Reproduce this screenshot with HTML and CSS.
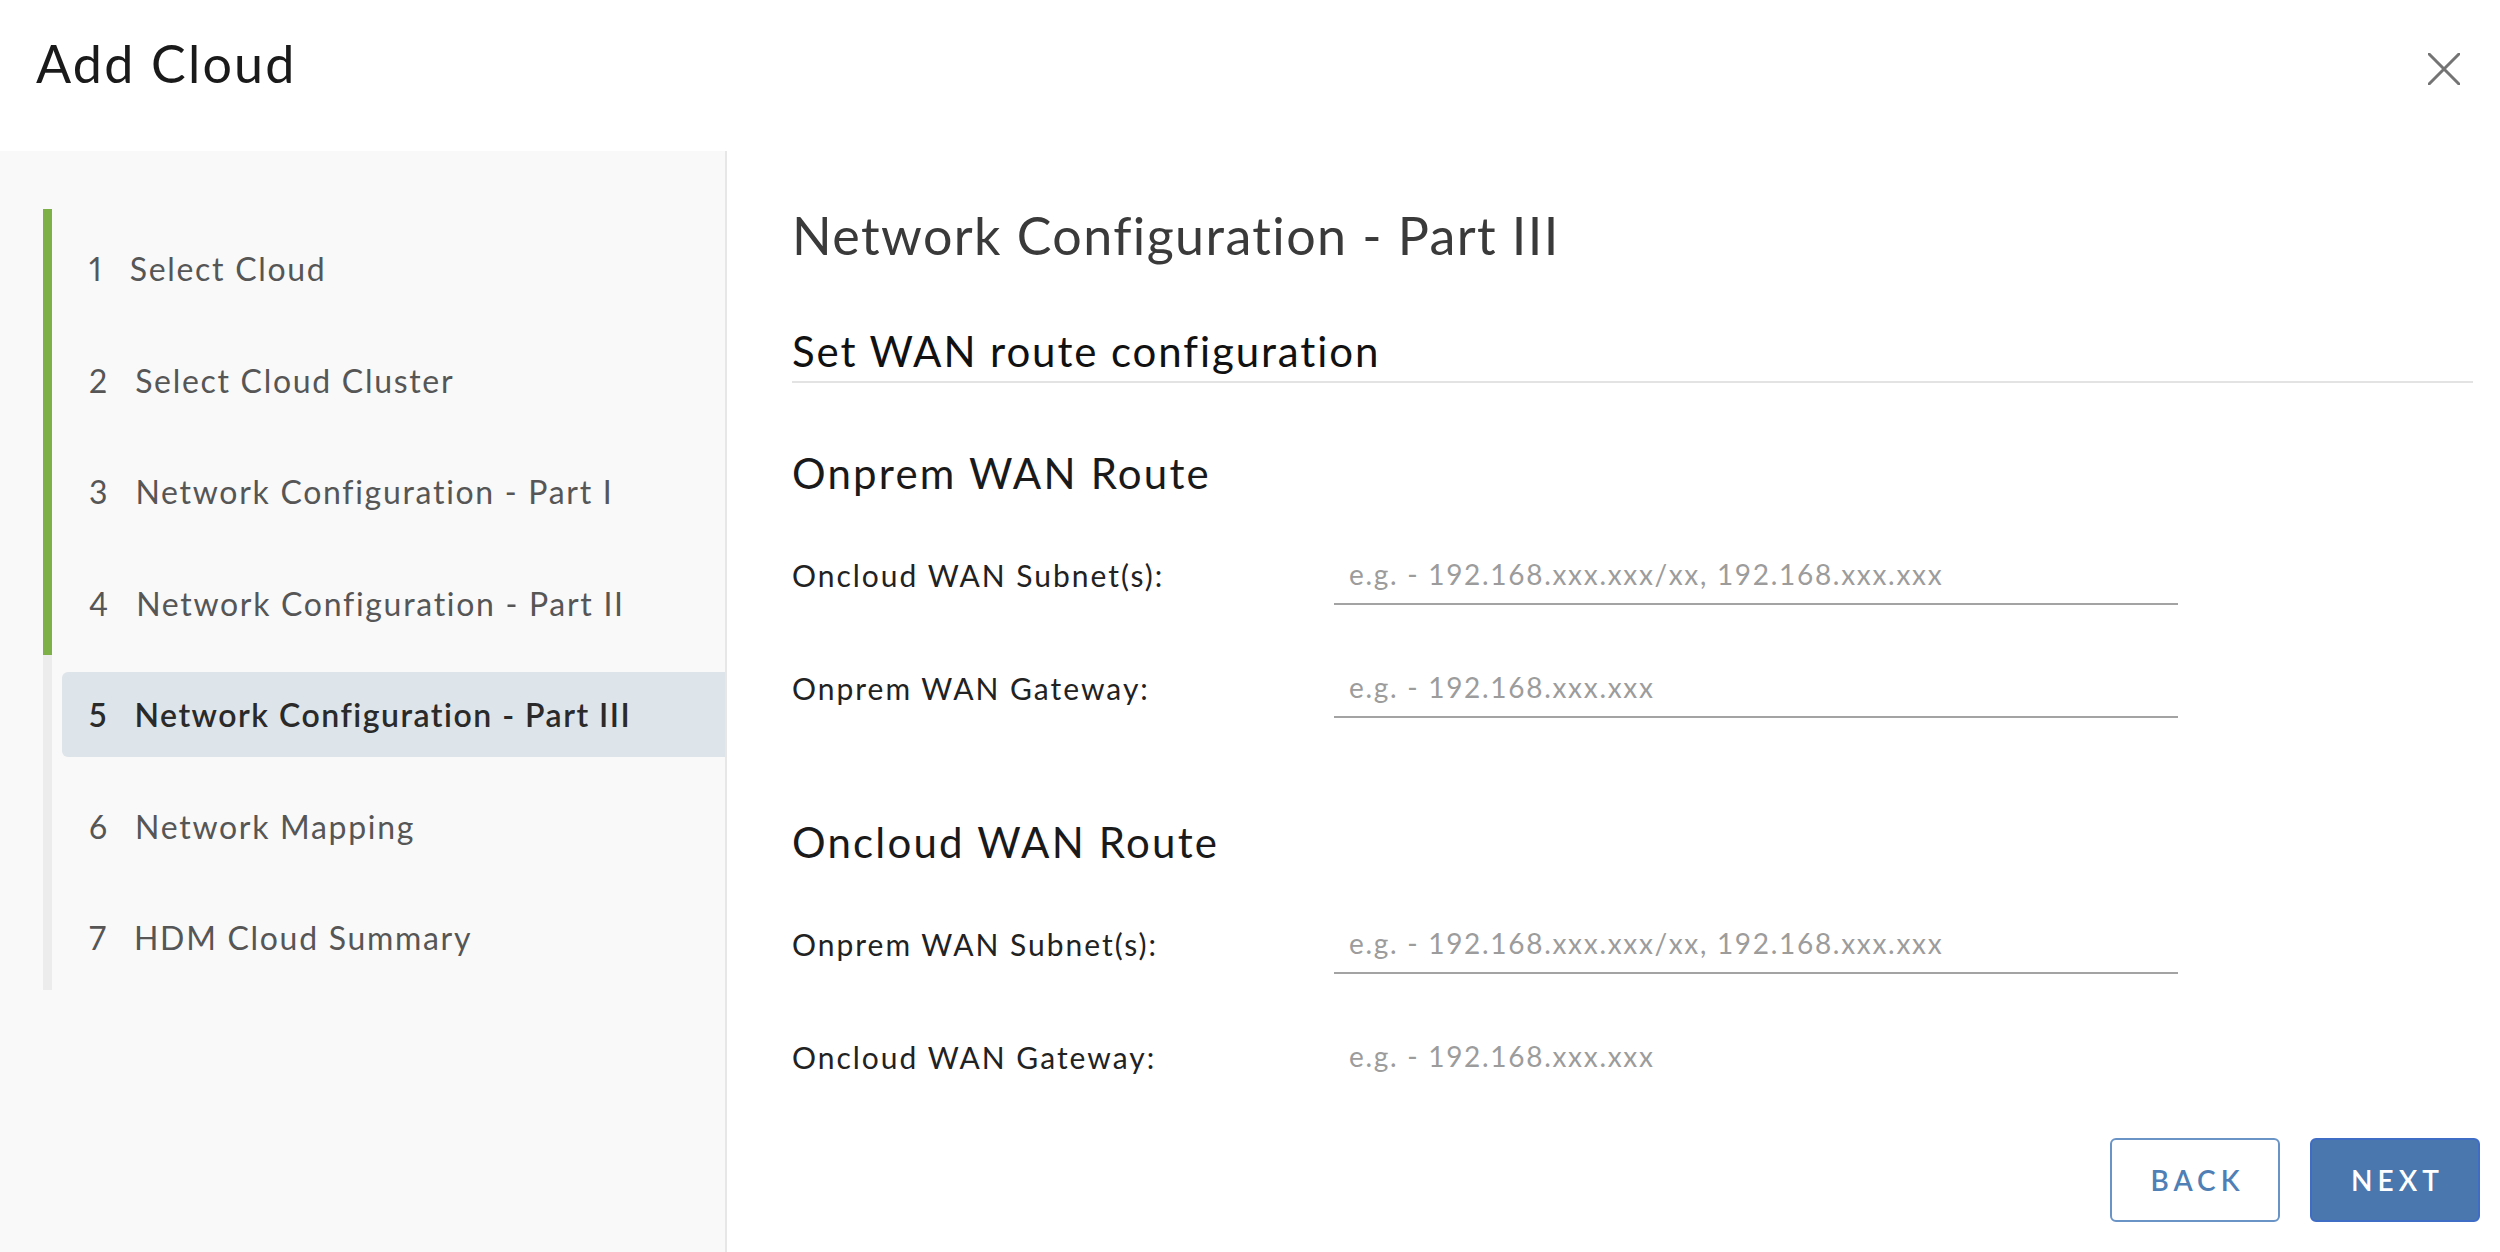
FILE: index.html
```html
<!DOCTYPE html>
<html lang="en">
<head>
<meta charset="utf-8">
<title>Add Cloud</title>
<link rel="stylesheet" href="styles.css">
</head>
<body>
<div class="modal">
  <header class="modal-header">
    <h1 class="modal-title">Add Cloud</h1>
    <button class="close" aria-label="Close">
      <svg width="32" height="32" viewBox="0 0 32 32"><path d="M1 1 L31 31 M31 1 L1 31" stroke="#747474" stroke-width="3" fill="none" stroke-linecap="round"/></svg>
    </button>
  </header>
  <div class="modal-body">
    <nav class="stepnav">
      <ol class="steps">
        <li class="step done"><div class="step-btn"><span class="num">1</span>Select Cloud</div></li>
        <li class="step done"><div class="step-btn"><span class="num">2</span>Select Cloud Cluster</div></li>
        <li class="step done"><div class="step-btn"><span class="num">3</span>Network Configuration - Part I</div></li>
        <li class="step done"><div class="step-btn"><span class="num">4</span>Network Configuration - Part II</div></li>
        <li class="step"><div class="step-btn active"><span class="num">5</span>Network Configuration - Part III</div></li>
        <li class="step"><div class="step-btn"><span class="num">6</span>Network Mapping</div></li>
        <li class="step"><div class="step-btn"><span class="num">7</span>HDM Cloud Summary</div></li>
      </ol>
    </nav>
    <main class="page">
      <div class="page-content">
        <h2 class="page-title">Network Configuration - Part III</h2>
        <h3 class="section-title">Set WAN route configuration</h3>
        <h4 class="group-title first">Onprem WAN Route</h4>
        <div class="form-row">
          <label class="form-label">Oncloud WAN Subnet(s):</label>
          <input class="form-input" type="text" placeholder="e.g. - 192.168.xxx.xxx/xx, 192.168.xxx.xxx">
        </div>
        <div class="form-row">
          <label class="form-label">Onprem WAN Gateway:</label>
          <input class="form-input" type="text" placeholder="e.g. - 192.168.xxx.xxx">
        </div>
        <h4 class="group-title second">Oncloud WAN Route</h4>
        <div class="form-row">
          <label class="form-label">Onprem WAN Subnet(s):</label>
          <input class="form-input" type="text" placeholder="e.g. - 192.168.xxx.xxx/xx, 192.168.xxx.xxx">
        </div>
        <div class="form-row">
          <label class="form-label">Oncloud WAN Gateway:</label>
          <input class="form-input" type="text" placeholder="e.g. - 192.168.xxx.xxx">
        </div>
      </div>
      <footer class="page-footer">
        <button class="btn btn-outline">BACK</button>
        <button class="btn btn-primary">NEXT</button>
      </footer>
    </main>
  </div>
</div>
</body>
</html>
```
FILE: styles.css
```css
* { box-sizing: border-box; }
html, body { margin: 0; padding: 0; }
body {
  width: 2500px;
  height: 1252px;
  overflow: hidden;
  background: #fff;
  font-family: "Lato", "Liberation Sans", sans-serif;
  color: #222;
}
.modal { width: 2500px; height: 1252px; display: flex; flex-direction: column; }

.modal-header {
  height: 151px;
  display: flex;
  justify-content: space-between;
  align-items: flex-start;
  flex: none;
}
.modal-title {
  margin: 0;
  padding: 33px 0 0 36px;
  font-size: 52px;
  line-height: 60px;
  font-weight: 400;
  letter-spacing: 2.2px;
  color: #1a1a1a;
}
.close {
  margin: 53px 40px 0 0;
  width: 32px;
  height: 32px;
  padding: 0;
  border: 0;
  background: none;
  display: block;
}
.close svg { display: block; }

.modal-body { flex: 1; display: flex; min-height: 0; }

.stepnav {
  width: 727px;
  flex: none;
  background: #f9f9f9;
  border-right: 2px solid #e7e7e7;
  padding: 58px 0 0 43px;
}
.steps { list-style: none; margin: 0; padding: 0; }
.step {
  height: 111.5px;
  padding-top: 17px;
  border-left: 9px solid #ececec;
}
.step.done { border-left-color: #7db047; }
.step-btn {
  height: 85px;
  margin-left: 10px;
  padding-left: 27px;
  display: flex;
  align-items: center;
  font-size: 32px;
  letter-spacing: 1.7px;
  color: #565656;
  border-radius: 6px 0 0 6px;
  white-space: nowrap;
}
.step-btn.active {
  background: #dde4ea;
  color: #2a2a2a;
  font-weight: 600;
  letter-spacing: 1.5px;
}
.num {
  margin-right: 28px;
  font-variant-numeric: proportional-nums;
  letter-spacing: 0;
}

.page { flex: 1; display: flex; flex-direction: column; min-width: 0; }
.page-content {
  height: 934px;
  overflow: hidden;
  padding: 54px 27px 0 65px;
  flex: none;
}
.page-title {
  margin: 0;
  font-size: 52px;
  line-height: 60px;
  font-weight: 400;
  letter-spacing: 1.4px;
  color: #3a3a3a;
}
.section-title {
  margin: 61px 0 0;
  font-size: 42px;
  line-height: 50px;
  font-weight: 400;
  letter-spacing: 1.9px;
  color: #111;
  padding-bottom: 5px;
  border-bottom: 2px solid #e3e3e3;
}
.group-title {
  margin: 0;
  font-size: 42px;
  line-height: 50px;
  font-weight: 400;
  letter-spacing: 2.2px;
  color: #1a1a1a;
}
.group-title.first { margin-top: 65px; }
.group-title.second { margin-top: 99px; }

.form-row {
  display: flex;
  align-items: center;
  height: 60px;
  margin-top: 53px;
}
.group-title + .form-row { margin-top: 47px; }
.form-label {
  width: 542px;
  flex: none;
  font-size: 30px;
  line-height: 60px;
  letter-spacing: 2px;
  color: #222;
}
.form-input {
  width: 844px;
  height: 60px;
  border: 0;
  border-bottom: 2px solid #a3a3a3;
  background: transparent;
  padding: 0 0 0 15px;
  font-family: inherit;
  font-size: 28px;
  letter-spacing: 1.7px;
  color: #222;
  outline: none;
}
.form-input::placeholder { color: #9c9c9c; }

.page-footer {
  flex: 1;
  display: flex;
  justify-content: flex-end;
  align-items: flex-start;
  gap: 30px;
  padding: 53px 20px 0 0;
}
.btn {
  width: 170px;
  height: 84px;
  border-radius: 6px;
  font-family: inherit;
  font-size: 28px;
  font-weight: 600;
  letter-spacing: 5px;
  padding: 0 0 0 5px;
  background: #fff;
}
.btn-outline {
  border: 2px solid #6a94c6;
  color: #4f7fb5;
}
.btn-primary {
  border: 2px solid #3f6cc4;
  background: #4a77ad;
  color: #fff;
}
```
